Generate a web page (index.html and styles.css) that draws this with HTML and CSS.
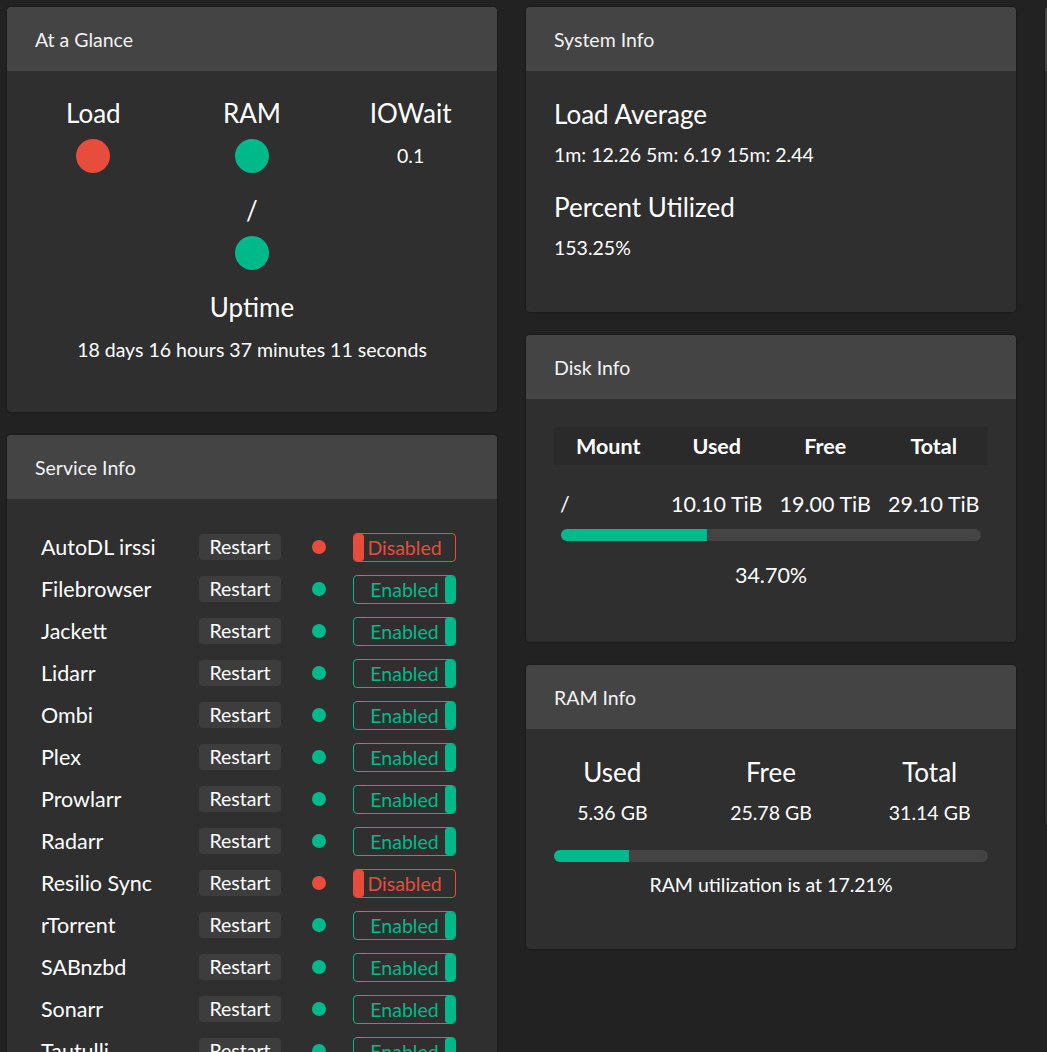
FILE: index.html
```html
<!DOCTYPE html>
<html lang="en">
<head>
  <meta charset="UTF-8" />
  <title>Dashboard</title>
  <link rel="stylesheet" href="styles.css">
</head>
<body>
  <div class="columns">
    <div class="column">
      <div class="panel">
        <div class="panel-head">At a Glance</div>
        <div class="panel-body glance">
          <div class="stat">
            <h4>Load</h4>
            <span class="light red"></span>
          </div>
          <div class="stat">
            <h4>RAM</h4>
            <span class="light green"></span>
          </div>
          <div class="stat">
            <h4>IOWait</h4>
            <div class="val">0.1</div>
          </div>
          <div class="stat wide">
            <h4>/</h4>
            <span class="light green"></span>
          </div>
          <div class="stat wide">
            <h4>Uptime</h4>
            <div class="val">18 days 16 hours 37 minutes 11 seconds</div>
          </div>
        </div>
      </div>

      <div class="panel">
        <div class="panel-head">Service Info</div>
        <div class="panel-body services" id="services"></div>
      </div>
    </div>

    <div class="column">
      <div class="panel">
        <div class="panel-head">System Info</div>
        <div class="panel-body sysinfo">
          <h4>Load Average</h4>
          <p>1m: 12.26 5m: 6.19 15m: 2.44</p>
          <h4>Percent Utilized</h4>
          <p>153.25%</p>
        </div>
      </div>

      <div class="panel">
        <div class="panel-head">Disk Info</div>
        <div class="panel-body disk">
          <div class="disk-head">
            <span>Mount</span>
            <span>Used</span>
            <span>Free</span>
            <span>Total</span>
          </div>
          <div class="disk-row">
            <span class="mount">/</span>
            <span>10.10 TiB</span>
            <span>19.00 TiB</span>
            <span>29.10 TiB</span>
          </div>
          <div class="bar disk-bar"><div class="fill" style="width: 34.7%"></div></div>
          <div class="disk-pct">34.70%</div>
        </div>
      </div>

      <div class="panel">
        <div class="panel-head">RAM Info</div>
        <div class="panel-body ram">
          <div class="ram-grid">
            <div class="ram-cell"><h4>Used</h4><p>5.36 GB</p></div>
            <div class="ram-cell"><h4>Free</h4><p>25.78 GB</p></div>
            <div class="ram-cell"><h4>Total</h4><p>31.14 GB</p></div>
          </div>
          <div class="bar ram-bar"><div class="fill" style="width: 17.21%"></div></div>
          <p class="ram-note">RAM utilization is at 17.21%</p>
        </div>
      </div>
    </div>

    <div class="column">
      <div class="panel ghost">
        <div class="panel-head">Bandwidth</div>
        <div class="panel-body"></div>
      </div>
    </div>
  </div>

  <script>
    const services = [
      { name: "AutoDL irssi", on: false },
      { name: "Filebrowser", on: true },
      { name: "Jackett", on: true },
      { name: "Lidarr", on: true },
      { name: "Ombi", on: true },
      { name: "Plex", on: true },
      { name: "Prowlarr", on: true },
      { name: "Radarr", on: true },
      { name: "Resilio Sync", on: false },
      { name: "rTorrent", on: true },
      { name: "SABnzbd", on: true },
      { name: "Sonarr", on: true },
      { name: "Tautulli", on: true }
    ];

    const list = document.getElementById("services");

    services.forEach(svc => {
      const row = document.createElement("div");
      row.className = "svc";
      const state = svc.on ? "on" : "off";
      row.innerHTML = `
        <span class="svc-name">${svc.name}</span>
        <button class="restart">Restart</button>
        <span class="status ${svc.on ? "green" : "red"}"></span>
        <span class="toggle ${state}"><span class="knob"></span><span class="label">${svc.on ? "Enabled" : "Disabled"}</span></span>`;
      list.appendChild(row);
    });
  </script>
</body>
</html>
```

FILE: styles.css
```css
html, body {
  margin: 0;
  height: 100%;
  overflow: hidden;
}
body {
  font-family: 'Lato', 'Liberation Sans', sans-serif;
  background: #222;
  color: #fff;
}
h4, p {
  margin: 0;
  font-weight: normal;
}
.columns {
  display: grid;
  grid-template-columns: 490px 490px 490px;
  column-gap: 29px;
  padding: 7px;
  align-items: start;
}
.column {
  display: flex;
  flex-direction: column;
  gap: 23px;
}
.panel {
  background: #2f2f2f;
  border-radius: 4px;
  overflow: hidden;
  box-shadow: 0 0 2px rgba(0, 0, 0, 0.6);
}
.panel-head {
  background: #444;
  height: 64px;
  padding: 0 28px;
  display: flex;
  align-items: center;
  font-size: 19.5px;
  color: #f2f2f2;
}
.panel-body {
  padding: 28px 7px 47px;
}

/* at a glance */
.glance {
  display: grid;
  grid-template-columns: repeat(3, 1fr);
  row-gap: 23px;
  padding-bottom: 45px;
}
.stat {
  display: flex;
  flex-direction: column;
  align-items: center;
  gap: 11px;
}
.stat.wide {
  grid-column: 1 / -1;
}
.stat h4 {
  font-size: 26px;
  line-height: 29px;
}
.light {
  width: 34px;
  height: 34px;
  border-radius: 50%;
  display: block;
}
.val {
  font-size: 19.5px;
  line-height: 34px;
}
.red { background: #e74c3c; }
.green { background: #00b98a; }

/* services */
.services {
  padding: 27px 7px 20px 34px;
}
.svc {
  display: flex;
  align-items: center;
  height: 42px;
}
.svc-name {
  width: 158px;
  font-size: 21.5px;
  white-space: nowrap;
}
.restart {
  width: 82px;
  height: 26px;
  padding: 0;
  border: none;
  border-radius: 4px;
  background: #3d3d3d;
  color: #fff;
  font-family: inherit;
  font-size: 19.5px;
  line-height: 26px;
}
.status {
  width: 14px;
  height: 14px;
  border-radius: 50%;
  margin-left: 31px;
}
.toggle {
  margin-left: 27px;
  width: 103px;
  height: 29px;
  box-sizing: border-box;
  border: 1px solid;
  border-radius: 4px;
  display: grid;
  grid-template-columns: 10px 1fr 10px;
  align-items: center;
  font-size: 19.5px;
}
.toggle .label {
  grid-column: 1 / -1;
  grid-row: 1;
  text-align: center;
  line-height: 25px;
}
.toggle .knob {
  grid-row: 1;
  align-self: stretch;
  border-radius: 3px;
}
.toggle.off {
  border-color: #e74c3c;
  color: #e74c3c;
}
.toggle.off .knob {
  grid-column: 1;
  background: #e74c3c;
}
.toggle.on {
  border-color: #00b98a;
  color: #00b98a;
}
.toggle.on .knob {
  grid-column: 3;
  background: #00b98a;
}

/* system info */
.sysinfo {
  padding: 29px 28px 53px;
}
.sysinfo h4 {
  font-size: 26px;
  line-height: 29px;
  margin-bottom: 15px;
}
.sysinfo p {
  font-size: 19.5px;
  line-height: 22px;
  margin-bottom: 27px;
}
.sysinfo p:last-child {
  margin-bottom: 0;
}

/* disk info */
.disk {
  padding: 28px 28px 55px;
}
.disk-head, .disk-row {
  display: grid;
  grid-template-columns: repeat(4, 1fr);
  text-align: center;
  font-size: 21.5px;
}
.disk-head {
  background: #2a2a2a;
  height: 38px;
  align-items: center;
  font-weight: bold;
}
.disk-row {
  margin-top: 27px;
  line-height: 24px;
}
.disk-row .mount {
  text-align: left;
  padding-left: 6px;
}
.bar {
  height: 12px;
  border-radius: 6px;
  background: #444;
  overflow: hidden;
}
.bar .fill {
  height: 100%;
  background: #00b98a;
}
.disk-bar {
  margin: 13px 7px 0;
}
.disk-pct {
  margin-top: 22px;
  text-align: center;
  font-size: 21.5px;
  line-height: 24px;
}

/* ram info */
.ram {
  padding: 29px 7px 53px;
}
.ram-grid {
  display: grid;
  grid-template-columns: repeat(3, 1fr);
  text-align: center;
}
.ram-cell h4 {
  font-size: 26px;
  line-height: 29px;
  margin-bottom: 15px;
}
.ram-cell p {
  font-size: 19.5px;
  line-height: 22px;
}
.ram-bar {
  margin: 26px 21px 0;
}
.ram-note {
  margin-top: 12px;
  text-align: center;
  font-size: 19.5px;
  line-height: 22px;
}

.ghost .panel-body {
  height: 680px;
}
```
